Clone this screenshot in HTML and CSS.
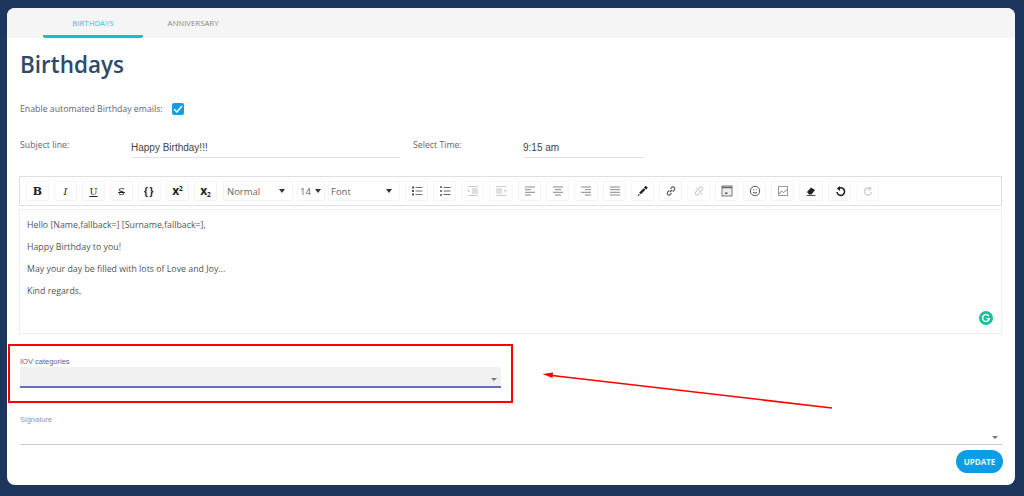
FILE: index.html
```html
<!DOCTYPE html>
<html lang="en">
<head>
<meta charset="utf-8">
<title>Birthdays</title>
<link rel="stylesheet" href="styles.css">
</head>
<body>
<main class="card">
  <nav class="tabs">
    <a class="tab active">BIRTHDAYS</a>
    <a class="tab">ANNIVERSARY</a>
  </nav>
  <section class="content">
    <h1 class="title">Birthdays</h1>
    <div class="enable">
      <span class="label">Enable automated Birthday emails:</span>
      <span class="check"><svg viewBox="0 0 12 12" width="12" height="12"><path d="M2 6.2 5 9l5-6" fill="none" stroke="#fff" stroke-width="1.5"/></svg></span>
    </div>
    <div class="fields">
      <span class="label subject-label">Subject line:</span>
      <div class="input subject-input">Happy Birthday!!!</div>
      <span class="label time-label">Select Time:</span>
      <div class="input time-input">9:15 am</div>
    </div>
    <div class="toolbar">
      <span class="btn"><b class="serif">B</b></span>
      <span class="btn"><i class="serif thin">I</i></span>
      <span class="btn"><u class="serif thin">U</u></span>
      <span class="btn"><s class="serif thin">S</s></span>
      <span class="btn mono">{}</span>
      <span class="btn"><b class="sup">x<sup>2</sup></b></span>
      <span class="btn"><b class="sup">x<sub>2</sub></b></span>
      <span class="btn dd dd-normal">Normal<em class="caret"></em></span>
      <span class="btn dd dd-size">14<em class="caret"></em></span>
      <span class="btn dd dd-font">Font<em class="caret"></em></span>
      <span class="btn"><svg class="ic" viewBox="0 0 14 14"><path d="M2 2.500h2v2H2zM2 6h2v2H2zM2 9.500h2v2H2z" fill="#555"/><path d="M5.500 3.500h7M5.500 7h7M5.500 10.500h7" stroke="#777"/></svg></span>
      <span class="btn"><svg class="ic" viewBox="0 0 14 14"><path d="M2 3h2M2 7h2M2 11h2" stroke="#555" stroke-width="1.300"/><path d="M5.500 3.500h7M5.500 7h7M5.500 10.500h7" stroke="#666"/></svg></span>
      <span class="btn off"><svg class="ic" viewBox="0 0 14 14"><path d="M2 2.500h10M2 11.500h10" stroke="#aaa"/><rect x="6" y="4" width="6" height="6" fill="#ccc"/><path d="M2 5.500l2 1.500-2 1.500z" fill="#aaa"/></svg></span>
      <span class="btn off w24"><svg class="ic" viewBox="0 0 14 14"><path d="M2 2.500h10M2 11.500h10" stroke="#aaa"/><rect x="2" y="4" width="6" height="6" fill="#ccc"/><path d="M12 5.500l-2 1.500 2 1.500z" fill="#aaa"/></svg></span>
      <span class="btn"><svg class="ic" viewBox="0 0 14 14"><path d="M2 3h10M2 5.700h6M2 8.300h10M2 11h6" stroke="#888"/></svg></span>
      <span class="btn"><svg class="ic" viewBox="0 0 14 14"><path d="M2 3h10M4 5.700h6M2 8.300h10M4 11h6" stroke="#888"/></svg></span>
      <span class="btn w24"><svg class="ic" viewBox="0 0 14 14"><path d="M2 3h10M6 5.700h6M2 8.300h10M6 11h6" stroke="#888"/></svg></span>
      <span class="btn"><svg class="ic" viewBox="0 0 14 14"><path d="M2 3h10M2 5.700h10M2 8.300h10M2 11h10" stroke="#888"/></svg></span>
      <span class="btn"><svg class="ic" viewBox="0 0 14 14"><path d="M4 9.500 8.500 5" stroke="#222" stroke-width="2.400"/><path d="M9 4.500 10.800 2.700" stroke="#222" stroke-width="3"/><path d="M3.500 10 2 12" stroke="#333"/></svg></span>
      <span class="btn"><svg class="ic" viewBox="0 0 14 14"><path d="M6 8l2-2M5.300 6.500 3.500 8.300a1.800 1.800 0 0 0 2.500 2.500L7.500 9.200M8.700 7.500l1.800-1.800A1.800 1.800 0 0 0 8 3.200L6.500 4.800" fill="none" stroke="#555" stroke-width="1.100"/></svg></span>
      <span class="btn off"><svg class="ic" viewBox="0 0 14 14"><path d="M5.300 6.500 3.500 8.300a1.800 1.800 0 0 0 2.500 2.500L7.500 9.200M8.700 7.500l1.800-1.800A1.800 1.800 0 0 0 8 3.200L6.500 4.800M4 3.500l6.500 7" fill="none" stroke="#aaa" stroke-width="1.100"/></svg></span>
      <span class="btn"><svg class="ic" viewBox="0 0 14 14"><rect x="2" y="2" width="10" height="10" fill="#eee" stroke="#777"/><path d="M2 3.500h10" stroke="#666" stroke-width="1.300"/><path d="M5 8.500h2.500V10H5z" fill="#555"/></svg></span>
      <span class="btn"><svg class="ic" viewBox="0 0 14 14"><circle cx="7" cy="7" r="4.700" fill="none" stroke="#555"/><path d="M5.200 5.800h1M7.800 5.800h1" stroke="#555"/><path d="M5 8.200q2 2 4 0" fill="none" stroke="#555"/></svg></span>
      <span class="btn"><svg class="ic" viewBox="0 0 14 14"><rect x="2.500" y="2.500" width="9" height="9" fill="none" stroke="#999"/><path d="M3 10l2.500-3 2 1.500L11 5.500" fill="none" stroke="#888"/></svg></span>
      <span class="btn w24"><svg class="ic" viewBox="0 0 14 14"><path d="M3 8l4-4.500 4 2.500-3.500 4.500H5z" fill="#222"/><path d="M2.500 11.500h9" stroke="#555"/></svg></span>
      <span class="btn"><svg class="ic" viewBox="0 0 14 14"><path d="M5 5a3.800 3.800 0 1 1-1 3" fill="none" stroke="#222" stroke-width="1.600"/><path d="M7 2v5L3.800 4.500z" fill="#222"/></svg></span>
      <span class="btn off"><svg class="ic" viewBox="0 0 14 14"><path d="M9.500 5a3.600 3.600 0 1 0 1 3" fill="none" stroke="#aaa" stroke-width="1.200"/><path d="M8 2.500v4.500l3-2.300z" fill="#aaa"/></svg></span>
    </div>
    <div class="editor">
      <p>Hello [Name,fallback=] [Surname,fallback=],</p>
      <p>Happy Birthday to you!</p>
      <p>May your day be filled with lots of Love and Joy...</p>
      <p>Kind regards,</p>
      <span class="grammarly"><svg viewBox="0 0 14 14" width="14" height="14"><circle cx="7" cy="7" r="7" fill="#15c39a"/><path d="M9.800 5.200A3.400 3.400 0 1 0 10.300 7.600H7.600" fill="none" stroke="#fff" stroke-width="1.400"/></svg></span>
    </div>
    <div class="select-block focused">
      <label class="mini-label">IOV categories</label>
      <div class="select"><em class="arrow"></em></div>
    </div>
    <div class="select-block signature">
      <label class="mini-label">Signature</label>
      <div class="select"><em class="arrow"></em></div>
    </div>
    <div class="actions"><button class="update">UPDATE</button></div>
  </section>
</main>
<div class="highlight"></div>
<svg class="pointer" width="1024" height="496" viewBox="0 0 1024 496"><path d="M832 408 552 375.500" stroke="#f00" stroke-width="1.500" fill="none"/><path d="M542.500 374 553 372.500 552.500 378z" fill="#f00"/></svg>
</body>
</html>
```
FILE: styles.css
```css
* { box-sizing: border-box; }
html, body { margin: 0; height: 100%; }
body {
  width: 1024px;
  height: 496px;
  overflow: hidden;
  background: #1d365e;
  padding: 8px 9px 11px 7px;
  font-family: "Open Sans", sans-serif;
  color: #555;
  position: relative;
}
.card {
  height: 477px;
  background: #fff;
  border-radius: 8px;
  overflow: hidden;
  display: flex;
  flex-direction: column;
}
.tabs {
  height: 30px;
  flex: none;
  background: #f5f5f5;
  padding-left: 36px;
  display: flex;
}
.tab {
  width: 100px;
  text-align: center;
  font-size: 7.800px;
  line-height: 30px;
  color: #8a8a8a;
}
.tab.active {
  color: #3cbfdc;
  border-bottom: 3px solid #14bdd9;
  border-radius: 0 0 2px 2px;
}
.content { padding: 0 13px; flex: 1; }
.title {
  margin: 10px 0 0;
  font-size: 22.500px;
  line-height: 33px;
  font-weight: 600;
  color: #2e4a6b;
}
.label { font-size: 8.750px; color: #666; }
.enable {
  display: flex;
  align-items: center;
  gap: 9px;
  margin-top: 19px;
  height: 18px;
}
.check {
  width: 12px;
  height: 12px;
  background: #1a9be6;
  border-radius: 2px;
  display: block;
  line-height: 0;
}
.fields {
  display: flex;
  margin-top: 18px;
  height: 24px;
  align-items: flex-start;
}
.subject-label { width: 111px; line-height: 14px; margin-top: 2px; }
.time-label { width: 110px; line-height: 14px; margin-top: 2px; }
.input {
  font-family: "Liberation Sans", sans-serif;
  font-size: 10px;
  line-height: 15px;
  color: #444;
  height: 22px;
  padding-top: 4px;
  border-bottom: 1.500px solid #e2e2e2;
}
.subject-input { width: 269px; margin-right: 13px; }
.time-input { width: 122px; }
.toolbar {
  margin: 16px 0 0 -1px;
  height: 30px;
  border: 1px solid #e0e0e0;
  display: flex;
  gap: 5px;
  padding: 4px 0 0 6px;
  width: 983px;
}
.btn {
  width: 23px;
  height: 20px;
  flex: none;
  background: #fff;
  border: 1px solid #f4f4f4;
  border-radius: 2px;
  display: flex;
  align-items: center;
  justify-content: center;
  font-size: 10px;
  color: #222;
}
.btn.off { opacity: .6; }
.btn.w24 { width: 24px; }
.serif { font-family: "DejaVu Serif", serif; font-size: 11px; color: #222; }
.serif.thin { font-size: 9.500px; }
.mono { font-family: "Liberation Sans", sans-serif; font-size: 10px; font-weight: 700; letter-spacing: 1.500px; }
.sup { font-family: "Open Sans", sans-serif; font-size: 12px; line-height: 12px; }
.sup sup, .sup sub { font-size: 6.500px; line-height: 0; }
.sup sup { vertical-align: 4px; }
.sup sub { vertical-align: -2px; }
.dd {
  justify-content: space-between;
  padding: 0 7px 0 3px;
  font-size: 9.500px;
  color: #666;
}
.dd-normal { width: 70px; margin-left: 1px; }
.dd-size { width: 28px; margin-left: -1px; padding: 0 3px 0 2px; }
.dd-font { width: 72px; margin-left: -2px; padding-left: 2px; }
.caret {
  width: 0;
  height: 0;
  border-left: 3.500px solid transparent;
  border-right: 3.500px solid transparent;
  border-top: 4px solid #333;
}
.ic { width: 14px; height: 14px; display: block; }
.editor {
  margin: 3px 0 0 -1px;
  height: 125px;
  width: 983px;
  border: 1px solid #eeeeee;
  padding: 9px 7px;
  position: relative;
}
.editor p {
  margin: 0 0 9px;
  font-size: 8.800px;
  line-height: 13px;
  color: #555;
}
.grammarly { position: absolute; right: 8px; bottom: 8px; width: 14px; height: 14px; line-height: 0; }
.select-block { width: 481px; }
.select-block.focused { margin-top: 22px; height: 37px; }
.mini-label {
  display: block;
  font-family: "Liberation Sans", sans-serif;
  font-size: 7.500px;
  line-height: 11px;
  color: #999;
}
.select {
  height: 21px;
  position: relative;
  border-bottom: 1.500px solid #ccc;
}
.focused .mini-label { color: #5a5fa8; }
.focused .select {
  background: #f1f1f1;
  border-bottom: 2px solid #6570b5;
}
.signature { width: 982px; margin-top: 21px; }
.signature .select { height: 20px; }
.arrow {
  position: absolute;
  right: 4px;
  bottom: 5px;
  width: 0;
  height: 0;
  border-left: 3.500px solid transparent;
  border-right: 3.500px solid transparent;
  border-top: 3.500px solid #777;
}
.actions { display: flex; justify-content: flex-end; width: 983px; margin-top: 5px; }
.update {
  width: 47px;
  height: 23px;
  border: 0;
  border-radius: 12px;
  background: #0e9de5;
  color: #e8f6fd;
  font-family: "Open Sans", sans-serif;
  font-size: 8px;
  font-weight: 700;
  padding: 0;
}
.highlight {
  position: absolute;
  left: 8px;
  top: 344px;
  width: 505px;
  height: 59px;
  border: 2px solid #f00;
}
.pointer { position: absolute; left: 0; top: 0; pointer-events: none; }
```
